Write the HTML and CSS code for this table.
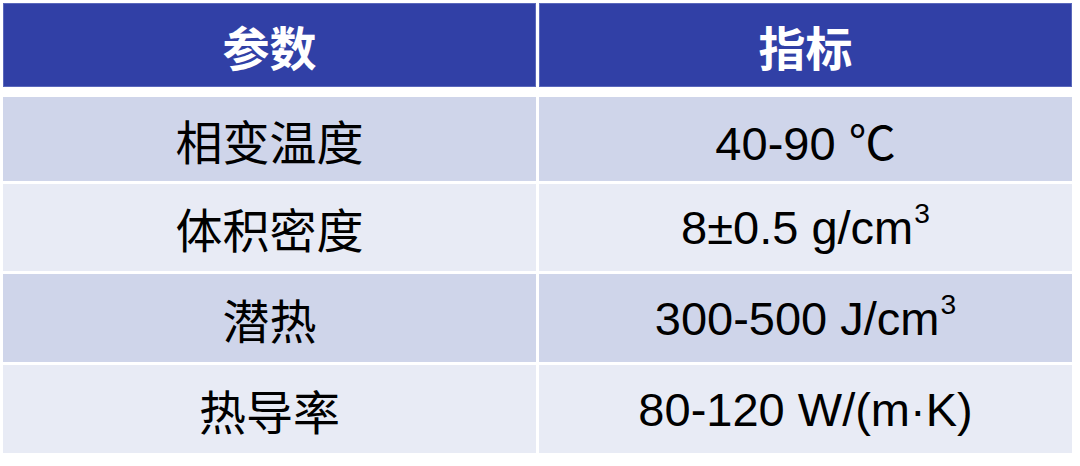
FILE: index.html
```html
<!DOCTYPE html>
<html lang="zh">
<head>
<meta charset="utf-8">
<link rel="stylesheet" href="styles.css">
</head>
<body>
<div class="table">
  <div class="row head">
    <div class="cell">参数</div>
    <div class="cell">指标</div>
  </div>
  <div class="body">
    <div class="row odd r1">
      <div class="cell">相变温度</div>
      <div class="cell">40-90 ℃</div>
    </div>
    <div class="row even r2">
      <div class="cell">体积密度</div>
      <div class="cell">8±0.5 g/cm<sup>3</sup></div>
    </div>
    <div class="row odd r3">
      <div class="cell">潜热</div>
      <div class="cell">300-500 J/cm<sup>3</sup></div>
    </div>
    <div class="row even r4">
      <div class="cell">热导率</div>
      <div class="cell">80-120 W/(m·K)</div>
    </div>
  </div>
</div>
</body>
</html>
```

FILE: styles.css
```css
html, body {
  margin: 0;
  padding: 0;
  background: #ffffff;
}
body {
  width: 1080px;
  height: 466px;
  overflow: hidden;
  font-family: "Liberation Sans", "Noto Sans CJK SC", sans-serif;
  font-size: 47px;
  color: #000;
}
.table {
  padding: 3px 0 0 3px;
  width: 1069px;
}
.row {
  display: grid;
  grid-template-columns: 533px 533px;
  column-gap: 3px;
}
.cell {
  display: flex;
  align-items: center;
  justify-content: center;
  white-space: nowrap;
  box-sizing: border-box;
}
.head {
  height: 84px;
  margin-bottom: 10px;
}
.head .cell {
  background: #3140a6;
  border: 1px solid #5a68bb;
  color: #ffffff;
  font-weight: bold;
  font-family: "Noto Sans CJK SC", sans-serif;
}
.body {
  display: flex;
  flex-direction: column;
  gap: 3px;
}
.r1 { height: 84px; }
.r2 { height: 87px; }
.r3 { height: 88px; }
.r4 { height: 88px; }
.odd .cell {
  background: #cfd5ea;
}
.even .cell {
  background: #e8ebf5;
}
.cell sup {
  font-size: 0.6em;
  line-height: 0;
  vertical-align: baseline;
  position: relative;
  top: -0.5em;
  margin-left: 1px;
}
```
